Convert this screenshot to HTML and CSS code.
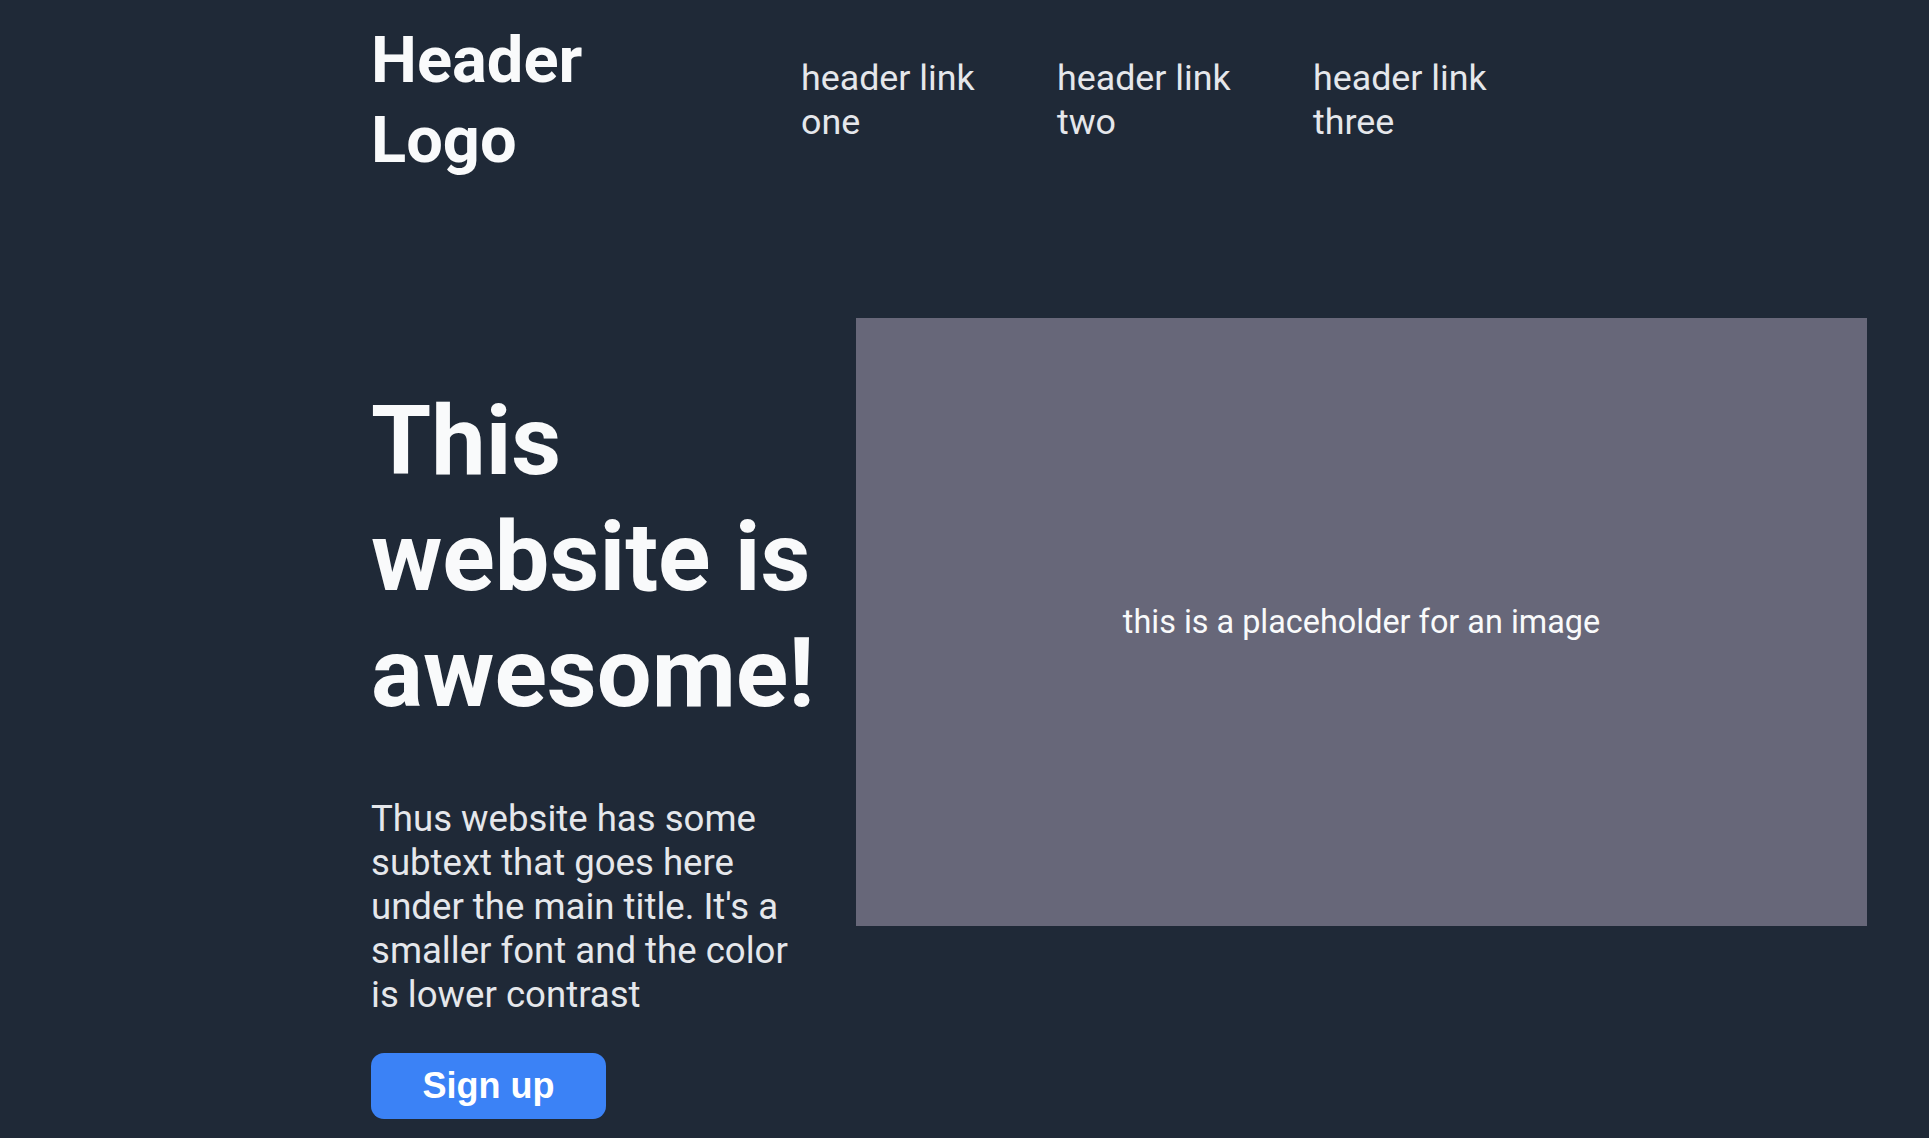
FILE: index.html
```html
<!DOCTYPE html>
<html lang="en">
<head>
<meta charset="utf-8">
<title>Header Logo</title>
<link rel="stylesheet" href="styles.css">
</head>
<body>
<div class="page">
  <header class="header">
    <div class="logo">Header Logo</div>
    <nav class="nav">
      <a class="nav-link" href="#">header link one</a>
      <a class="nav-link" href="#">header link two</a>
      <a class="nav-link" href="#">header link three</a>
    </nav>
  </header>
  <section class="hero">
    <div class="hero-text">
      <h1 class="hero-title">This website is awesome!</h1>
      <p class="hero-sub">Thus website has some subtext that goes here under the main title. It's a smaller font and the color is lower contrast</p>
      <button class="signup" type="button">Sign up</button>
    </div>
    <div class="placeholder">this is a placeholder for an image</div>
  </section>
</div>
</body>
</html>
```
FILE: styles.css
```css
html, body {
  margin: 0;
  padding: 0;
  background: #1f2937;
}
body {
  font-family: Roboto, "Noto Sans", sans-serif;
  color: #f9fafb;
  min-height: 1138px;
}
.page {
  padding-left: 371px;
  padding-right: 62px;
}
.header {
  display: flex;
  align-items: center;
  padding-top: 20px;
  gap: 210px;
}
.logo {
  width: 220px;
  font-size: 65px;
  line-height: 80px;
  font-weight: 700;
  color: #f9fafb;
}
.nav {
  display: flex;
  gap: 74px;
}
.nav-link {
  width: 182px;
  font-size: 35.8px;
  line-height: 44px;
  color: #e5e7eb;
  text-decoration: none;
}
.hero {
  display: flex;
  align-items: flex-start;
  gap: 39px;
  margin-top: 138px;
}
.hero-text {
  width: 446px;
  flex: none;
}
.hero-title {
  margin: 65px 0 65px;
  font-size: 97.2px;
  line-height: 116.2px;
  font-weight: 700;
  color: #f9fafb;
}
.hero-sub {
  margin: 0 0 36.6px;
  font-size: 36.6px;
  line-height: 44px;
  color: #e5e7eb;
}
.signup {
  display: block;
  height: 66px;
  width: 235px;
  border: none;
  border-radius: 13px;
  background: #3b82f6;
  color: #ffffff;
  font-family: "Liberation Sans", Arial, sans-serif;
  font-weight: 700;
  font-size: 36px;
  padding: 0;
}
.placeholder {
  flex: 1;
  height: 608px;
  background: #676779;
  display: flex;
  align-items: center;
  justify-content: center;
  font-size: 32.4px;
  color: #f9fafb;
}
```
